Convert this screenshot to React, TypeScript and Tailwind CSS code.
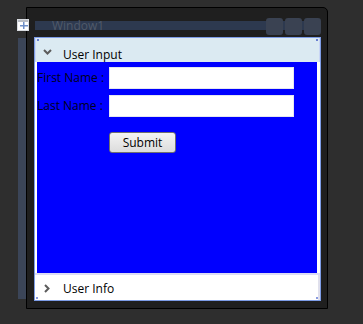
import React from "react";

const font = { fontFamily: '"Open Sans", "Noto Sans", sans-serif' };

function GridIcon() {
  return (
    <svg width="12" height="12" viewBox="0 0 12 12">
      <rect x="0" y="0" width="12" height="12" fill="#d8dbe0" />
      <rect x="1" y="1" width="10" height="10" fill="#ffffff" />
      <rect x="1" y="1" width="10" height="2" fill="#b8bcc4" />
      <rect x="6" y="3" width="1.5" height="7" fill="#6f8fc8" />
      <rect x="3" y="6" width="8" height="1.5" fill="#6f8fc8" />
    </svg>
  );
}

function ChevronDown() {
  return (
    <svg width="9" height="6" viewBox="0 0 9 6">
      <path d="M1 1 L4.5 4.5 L8 1" stroke="#5c5c5c" strokeWidth="2" fill="none" />
    </svg>
  );
}

function ChevronRight() {
  return (
    <svg width="6" height="9" viewBox="0 0 6 9">
      <path d="M1 1 L4.5 4.5 L1 8" stroke="#5c5c5c" strokeWidth="2" fill="none" />
    </svg>
  );
}

export default function App() {
  return (
    <div
      className="relative w-[363px] h-[324px] bg-[#2e2e2e] pt-[7px] pl-[26px] overflow-hidden"
      style={font}
    >
      {/* design-time adorners */}
      <div className="absolute left-[18px] top-[38px] w-[8px] h-[261px] bg-[#3b4558]" />
      <div className="absolute left-[17px] top-[19px]">
        <GridIcon />
      </div>

      {/* window */}
      <div className="w-[302px] h-[302px] border border-black bg-[#1f1f1f] rounded-tr-[5px] flex flex-col pl-[7px]">
        {/* title row */}
        <div className="relative h-[17px] mt-[10px] mr-[7px] ml-[1px]">
          <div className="absolute left-0 right-0 top-[3px] h-[9px] bg-[#2d394f]" />
          <div className="absolute left-[17px] top-[-1px] text-[12px] leading-[17px] text-[#505a6a]">
            Window1
          </div>
          <div className="absolute right-[-1px] top-0 flex gap-[2px]">
            <div className="w-[17px] h-[17px] rounded-[3px] bg-[#3a4252]" />
            <div className="w-[17px] h-[17px] rounded-[3px] bg-[#3a4252]" />
            <div className="w-[17px] h-[17px] rounded-[3px] bg-[#3a4252]" />
          </div>
        </div>

        {/* content */}
        <div className="mt-[2px] w-[287px] h-[264px] border border-[#7d9ce6] bg-white flex flex-col text-[12px] text-black">
          {/* header 1 */}
          <div className="relative h-[24px] bg-[#dbeaf2] border-l border-r border-[#c9d6f5] flex items-center">
            <div className="absolute left-[1px] top-[1px] w-[2px] h-[2px] bg-[#6a7fd0]" />
            <div className="absolute right-[1px] top-[1px] w-[2px] h-[2px] bg-[#6a7fd0]" />
            <div className="ml-[7px] mt-[3px] flex items-center">
              <ChevronDown />
            </div>
            <span className="ml-[11px] mt-[9px] leading-[16px]">User Input</span>
          </div>

          {/* blue body */}
          <div className="ml-[2px] mr-[3px] h-[211px] bg-[#0000ff] flex flex-col">
            <div className="mt-[5px] flex items-center h-[22px]">
              <span className="w-[72px] leading-[16px] text-[#000020] -mt-[1px]">First Name :</span>
              <div className="w-[185px] h-[22px] bg-white border border-[#e4e6f0]" />
            </div>
            <div className="mt-[6px] flex items-center h-[22px]">
              <span className="w-[72px] leading-[16px] text-[#000020] -mt-[1px]">Last Name :</span>
              <div className="w-[185px] h-[22px] bg-white border border-[#e4e6f0]" />
            </div>
            <div className="mt-[15px] ml-[72px]">
              <div className="w-[67px] h-[21px] rounded-[3px] border border-[#707070] bg-gradient-to-b from-[#f4f4f4] to-[#dcdcdc] flex items-center justify-center leading-[16px]">
                Submit
              </div>
            </div>
          </div>

          <div className="h-[2px] bg-[#dcdcf5]" />

          {/* header 2 */}
          <div className="relative flex-1 bg-white border-r-[2px] border-[#e0e0ec] flex items-center">
            <div className="ml-[9px] mt-[1px] flex items-center">
              <ChevronRight />
            </div>
            <span className="ml-[13px] mt-[2px] leading-[16px]">User Info</span>
            <div className="absolute left-[1px] bottom-[1px] w-[2px] h-[2px] bg-[#8a9be0]" />
            <div className="absolute right-0 bottom-[1px] w-[2px] h-[2px] bg-[#8a9be0]" />
          </div>
        </div>
      </div>
    </div>
  );
}
